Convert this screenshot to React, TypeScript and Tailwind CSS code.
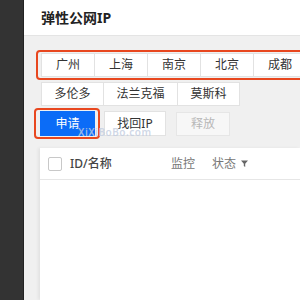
import clsx from "clsx";

const regions = ["广州", "上海", "南京", "北京", "成都"];
const moreRegions = [
  { name: "多伦多", w: "w-[63px]" },
  { name: "法兰克福", w: "w-[75px]" },
  { name: "莫斯科", w: "w-[63px]" },
];

function FilterIcon() {
  return (
    <svg width="7" height="7" viewBox="0 0 7 7" aria-hidden>
      <path d="M0 0.5h7L4.2 3.8V7L2.8 6V3.8z" fill="#666" />
    </svg>
  );
}

export default function App() {
  return (
    <div
      className="flex h-[300px] w-[300px] overflow-hidden text-[#333]"
      style={{ fontFamily: '"Noto Sans", "Noto Sans CJK SC", sans-serif' }}
    >
      <aside className="w-[24px] shrink-0 border-r border-[#222] bg-[#333]" />

      <main className="relative flex min-w-0 flex-1 flex-col bg-[#f0f0f0]">
        <header className="flex h-[36px] shrink-0 items-center border-b border-[#e4e4e4] bg-white pl-[17px]">
          <h1 className="text-[14px] font-bold leading-none text-[#222]">弹性公网IP</h1>
        </header>

        <div className="ml-[12px] mt-[14px] flex w-max rounded-[4px] border-2 border-[#e8471f] px-[3px] py-px">
          {regions.map((r, i) => (
            <button
              key={r}
              type="button"
              className={clsx(
                "flex h-[24px] w-[54px] items-center justify-center border border-[#e2e2e2] bg-white text-[12px] text-[#333]",
                i > 0 && "-ml-px"
              )}
            >
              {r}
            </button>
          ))}
        </div>

        <div className="ml-[17px] mt-[2px] flex">
          {moreRegions.map((r, i) => (
            <button
              key={r.name}
              type="button"
              className={clsx(
                "flex h-[24px] items-center justify-center border border-[#e2e2e2] bg-white text-[12px] text-[#333]",
                r.w,
                i > 0 && "-ml-px"
              )}
            >
              {r.name}
            </button>
          ))}
        </div>

        <div className="ml-[10px] mt-[2px] flex items-center">
          <div className="rounded-[4px] border-2 border-[#e8471f] py-px pl-[4px] pr-[3px]">
            <button
              type="button"
              className="flex h-[25px] w-[55px] items-center justify-center bg-[#0b6cf7] text-[12px] text-white"
            >
              申请
            </button>
          </div>
          <button
            type="button"
            className="ml-[4px] flex h-[25px] w-[62px] items-center justify-center border border-[#e2e2e2] bg-white text-[12px] text-[#333]"
          >
            找回IP
          </button>
          <button
            type="button"
            disabled
            className="ml-[10px] flex h-[24px] w-[54px] items-center justify-center border border-[#e6e6e6] bg-[#f7f7f7] text-[12px] text-[#b8b8b8]"
          >
            释放
          </button>
        </div>

        <section className="ml-[16px] mt-[9px] flex-1 bg-white shadow-[-2px_0_3px_rgba(0,0,0,0.06)]">
          <div className="flex h-[32px] items-center border-b border-[#e6e6e6] text-[12px]">
            <span className="ml-[8px] h-[14px] w-[14px] rounded-[2px] border border-[#c8c8c8] bg-white" />
            <span className="ml-[8px] w-[101px] font-medium text-[#444]">ID/名称</span>
            <span className="w-[41px] text-[#777]">监控</span>
            <span className="flex items-center gap-[5px] text-[#777]">
              状态
              <FilterIcon />
            </span>
          </div>
        </section>

        <span className="pointer-events-none absolute left-[54px] top-[127px] text-[10px] font-semibold leading-none tracking-[0.5px] text-[#c3cde0]/80">
          XiXiBoBo.com
        </span>
      </main>
    </div>
  );
}
